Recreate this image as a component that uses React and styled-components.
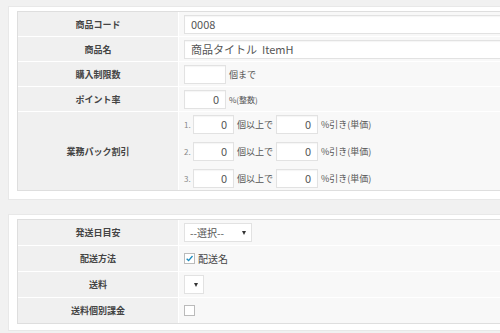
import React from "react";
import styled, { createGlobalStyle } from "styled-components";

const GlobalStyle = createGlobalStyle`
  html, body {
    margin: 0;
    padding: 0;
    background: #f1f1f1;
    overflow: hidden;
  }
  body {
    font-family: "Noto Sans CJK JP", "Noto Sans", sans-serif;
    color: #444;
  }
`;

const Page = styled.div`
  padding: 6px 0 0 8px;
  display: flex;
  flex-direction: column;
  gap: 14px;
`;

const Panel = styled.div`
  background: #fff;
  border: 1px solid #e8e8e8;
  border-right: none;
  padding: ${(p) => p.$pad};
`;

const Table = styled.div`
  display: grid;
  grid-template-columns: 160px 1fr;
  gap: 1px;
  background: #fff;
  border: 1px solid #dedede;
  border-right: none;
`;

const Label = styled.div`
  background: #f0f0f0;
  display: flex;
  align-items: center;
  justify-content: center;
  font-size: 9px;
  font-weight: 700;
  color: #444;
  height: ${(p) => (p.$h ? p.$h + "px" : "auto")};
  grid-row: ${(p) => (p.$span ? `span ${p.$span}` : "auto")};
`;

const Value = styled.div`
  background: #f8f8f8;
  display: flex;
  flex-direction: ${(p) => (p.$column ? "column" : "row")};
  align-items: ${(p) => (p.$column ? "stretch" : "center")};
  gap: 3px;
  padding-left: 5px;
  min-height: ${(p) => p.$h}px;
  overflow: hidden;
  font-size: 9px;
  color: #555;
`;

const Line = styled.div`
  height: 24px;
  display: flex;
  align-items: center;
  gap: 3px;
`;

const Input = styled.div`
  box-sizing: border-box;
  flex: none;
  width: ${(p) => p.$w};
  height: 19px;
  background: #fff;
  border: 1px solid #e2e2e2;
  box-shadow: inset 0 1px 1px rgba(0, 0, 0, 0.04);
  display: flex;
  align-items: center;
  justify-content: ${(p) => (p.$right ? "flex-end" : "flex-start")};
  padding: 0 6px;
  font-size: 11px;
  color: #555;
  white-space: nowrap;
`;

const Num = styled.span`
  width: 6px;
  font-size: 8px;
  color: #888;
`;

const Note = styled.span`
  font-size: ${(p) => (p.$small ? "8px" : "9px")};
  color: #555;
  white-space: nowrap;
`;

const Select = styled.div`
  box-sizing: border-box;
  width: ${(p) => p.$w};
  height: 19px;
  background: #fff;
  border: 1px solid #e2e2e2;
  display: flex;
  align-items: center;
  justify-content: space-between;
  padding: 0 5px 0 5px;
  font-size: 10px;
  color: #555;
`;

const Arrow = styled.span`
  width: 0;
  height: 0;
  border-left: 2.5px solid transparent;
  border-right: 2.5px solid transparent;
  border-top: 4px solid #333;
  margin-left: auto;
`;

const Check = styled.span`
  box-sizing: border-box;
  width: 11px;
  height: 11px;
  background: #fff;
  border: 1px solid #bbb;
  display: inline-flex;
  align-items: center;
  justify-content: center;
  svg {
    width: 11px;
    height: 11px;
  }
`;

const CheckLabel = styled.span`
  font-size: 10px;
  color: #444;
`;

const discounts = [1, 2, 3];

export default function App() {
  return (
    <>
      <GlobalStyle />
      <Page>
        <Panel $pad="4px 0 8px 8px">
          <Table>
            <Label $h={24}>商品コード</Label>
            <Value $h={24}>
              <Input $w="calc(100% + 20px)">0008</Input>
            </Value>
            <Label $h={24}>商品名</Label>
            <Value $h={24}>
              <Input $w="calc(100% + 20px)">商品タイトル&nbsp;&nbsp;ItemH</Input>
            </Value>
            <Label $h={24}>購入制限数</Label>
            <Value $h={24}>
              <Input $w="42px" />
              <Note>個まで</Note>
            </Value>
            <Label $h={24}>ポイント率</Label>
            <Value $h={24}>
              <Input $w="42px" $right>
                0
              </Input>
              <Note $small>%(整数)</Note>
            </Value>
            <Label>業務パック割引</Label>
            <Value $column $h={74}>
              {discounts.map((n) => (
                <Line key={n}>
                  <Num>{n}.</Num>
                  <Input $w="41px" $right>
                    0
                  </Input>
                  <Note>個以上で</Note>
                  <Input $w="42px" $right>
                    0
                  </Input>
                  <Note>%引き(単価)</Note>
                </Line>
              ))}
            </Value>
          </Table>
        </Panel>
        <Panel $pad="4px 0 6px 8px">
          <Table>
            <Label $h={25}>発送日目安</Label>
            <Value $h={25}>
              <Select $w="68px">
                --選択--
                <Arrow />
              </Select>
            </Value>
            <Label $h={25}>配送方法</Label>
            <Value $h={25}>
              <Check>
                <svg viewBox="0 0 12 12">
                  <path
                    d="M2.2 6.2 L4.8 8.8 L10 2.6"
                    fill="none"
                    stroke="#1e8cbe"
                    strokeWidth="1.8"
                  />
                </svg>
              </Check>
              <CheckLabel>配送名</CheckLabel>
            </Value>
            <Label $h={25}>送料</Label>
            <Value $h={25}>
              <Select $w="20px">
                <Arrow />
              </Select>
            </Value>
            <Label $h={25}>送料個別課金</Label>
            <Value $h={25}>
              <Check />
            </Value>
          </Table>
        </Panel>
      </Page>
    </>
  );
}
